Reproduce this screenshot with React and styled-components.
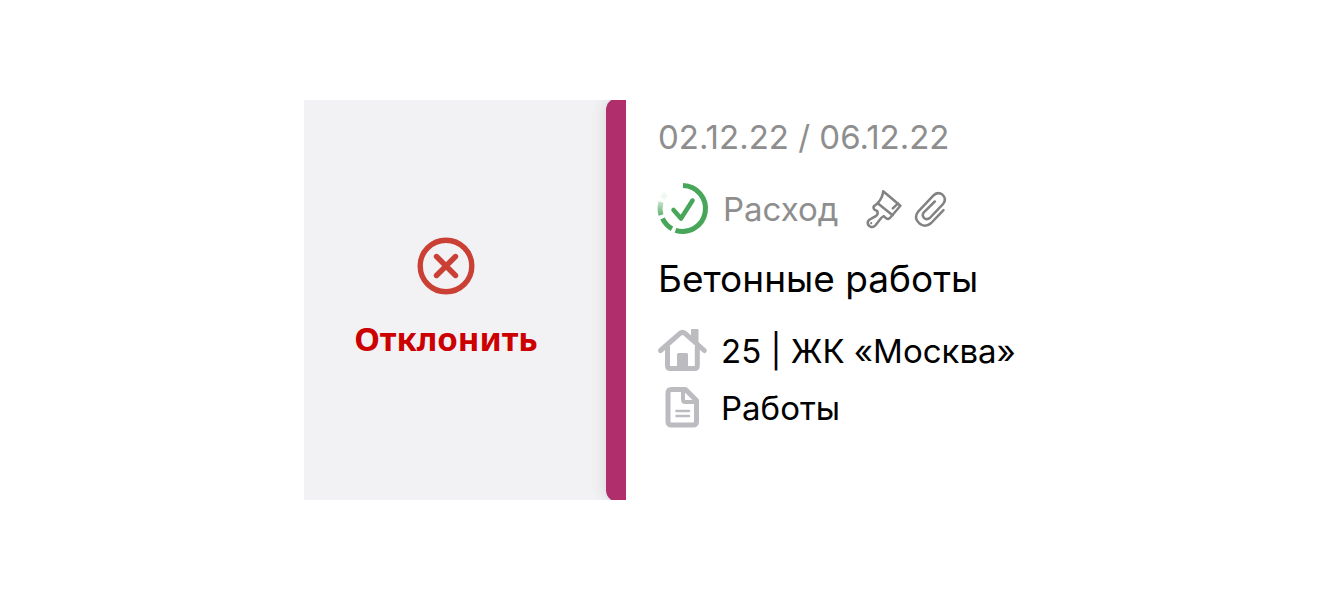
import React from "react";
import styled, { createGlobalStyle } from "styled-components";

const GlobalStyle = createGlobalStyle`
  *, *::before, *::after { box-sizing: border-box; }
  body { margin: 0; background: #fff; font-family: Inter, "Liberation Sans", sans-serif; }
`;

const Page = styled.main`
  display: flex;
  align-items: center;
  justify-content: center;
  min-height: 100vh;
`;

const SwipeCard = styled.article`
  display: flex;
  width: 100%;
  max-width: 735px;
  min-height: 400px;
  background: #fff;
`;

const ActionPanel = styled.div`
  display: flex;
  flex: 0 0 322px;
  background: #f2f2f5;
  overflow: hidden;
`;

const RejectButton = styled.button`
  display: flex;
  flex: 1;
  flex-direction: column;
  align-items: center;
  justify-content: center;
  gap: 22px;
  padding: 0 18px 3px 0;
  border: 0;
  background: none;
  color: #cc0000;
  font: 700 33px/44px "Noto Sans", sans-serif;
  cursor: pointer;
`;

const Stripe = styled.div`
  flex: 0 0 20px;
  margin: -2px 0;
  border-radius: 12px 0 0 12px;
  background: #b02e6c;
  box-shadow: 0 0 16px rgba(0, 0, 0, 0.12);
`;

const Details = styled.div`
  flex: 1;
  min-width: 0;
  padding: 17px 0 0 32px;
`;

const Dates = styled.p`
  margin: 0 0 26px;
  color: #8e8e8e;
  font-size: 33px;
  line-height: 40px;
`;

const StatusRow = styled.div`
  display: flex;
  align-items: center;
  height: 52px;
  color: #8e8e8e;
  font-size: 33px;
  line-height: 40px;
`;

const StatusLabel = styled.span`
  margin: 0 27px 0 13px;
`;

const Attachments = styled.span`
  display: flex;
  gap: 11px;
`;

const Title = styled.h1`
  margin: 20px 0 26px;
  color: #000;
  font-size: 37px;
  font-weight: 400;
  line-height: 48px;
`;

const InfoList = styled.ul`
  display: grid;
  gap: 13px;
  margin: 0;
  padding: 0;
  list-style: none;
`;

const InfoItem = styled.li`
  display: flex;
  align-items: center;
  gap: 13px;
  color: #000;
  font-size: 33px;
  line-height: 44px;
`;

const Icon = styled.svg`
  display: block;
  flex: none;
  overflow: visible;
  fill: none;
  stroke: currentColor;
  stroke-linecap: round;
  stroke-linejoin: round;
`;

const MutedIcon = styled(Icon)`
  color: #bbbbc0;
`;

const DangerIcon = styled(Icon)`
  color: #cb4035;
`;

const SuccessIcon = styled(Icon)`
  color: #47a659;
`;

const AttachmentIcon = styled(Icon)`
  color: #828282;
`;

const RejectIcon = () => (
  <DangerIcon width="58" height="58" viewBox="0 0 58 58" strokeWidth="5.4" aria-hidden="true">
    <circle cx="29" cy="29" r="25.8" />
    <path d="M19.5 19.5 38.5 38.5M38.5 19.5 19.5 38.5" />
  </DangerIcon>
);

const ApprovedIcon = () => (
  <SuccessIcon width="52" height="52" viewBox="0 0 52 52" strokeWidth="5" role="img" aria-label="Одобрено">
    <defs>
      <linearGradient id="fade" x1="0" y1="32" x2="0" y2="13" gradientUnits="userSpaceOnUse">
        <stop offset="0" stopColor="#47a659" stopOpacity="0.85" />
        <stop offset="1" stopColor="#47a659" stopOpacity="0.08" />
      </linearGradient>
    </defs>
    <g strokeLinecap="butt">
      <path d="M25 2.5A23 23 0 1 1 17.5 47.4" />
      <path d="M14 45.7A23 23 0 0 1 4.5 35.5" />
      <path d="M3 32A23 23 0 0 1 3 19" stroke="url(#fade)" />
      <path d="M4.5 15.5A23 23 0 0 1 8 10.5" strokeOpacity="0.08" />
    </g>
    <path d="m15.5 27 7.5 8.5L34.5 17.5" strokeWidth="4.5" />
  </SuccessIcon>
);

const BrushIcon = () => (
  <AttachmentIcon width="37" height="40" viewBox="0 0 37 40" strokeWidth="2.5" aria-hidden="true">
    <path d="M17.2 2.2 34.4 16.7 23.7 29.2Q22 30.8 20.2 29.3L17.8 27.1Q15.8 27.8 13.8 30.7L9.3 36.5Q7.1 38.8 4.3 37.6 1 36 1.9 32.5 2.5 30.7 5.7 29.4L10.2 26.8Q12.4 25 11.3 22.2L8.3 20.5Q6.8 18.6 8.2 16.9L11.7 14.2Q16.5 9.2 17.2 2.2Z" />
    <path d="M11.7 14.2 26.6 26.2M31.8 14.6 26.8 19.3" />
    <circle cx="5.2" cy="34.2" r="0.5" strokeWidth="1.2" />
  </AttachmentIcon>
);

const ClipIcon = () => (
  <AttachmentIcon width="34" height="40" viewBox="0 0 34 40" strokeWidth="2.5" aria-hidden="true">
    <path d="M29.5 21.2 17.2 34Q11.4 39.2 5.5 34.6-.8 29 4.2 22.6L19.7 6.2Q24 2.4 28.4 5.6 33 9.7 29.2 14.8L15.8 29Q13.2 31.2 10.3 29.2 7.4 26.4 9.8 23.4L20.8 12.5" />
  </AttachmentIcon>
);

const HomeIcon = () => (
  <MutedIcon width="50" height="44" viewBox="0 0 50 44" strokeWidth="5" aria-hidden="true">
    <path d="M2.5 21.5 22.3 4.2Q24.5 2.4 26.7 4.2L46.3 21.5" />
    <path d="M9.5 18V36.5Q9.5 39.5 12.5 39.5H36.3Q39.3 39.5 39.3 36.5V18" />
    <path d="M33 1Q33 0 34 0H39.5Q40.5 0 40.5 1V16L33 10ZM19 25.5Q19 24 20.5 24H28.5Q30 24 30 25.5V40H19Z" fill="currentColor" stroke="none" />
  </MutedIcon>
);

const DocumentIcon = () => (
  <MutedIcon width="50" height="44" viewBox="0 0 50 44" strokeWidth="5" aria-hidden="true">
    <path d="M13.5 3.5H27.5L38.5 14.5V35.5Q38.5 39 35 39H13.5Q10 39 10 35.5V7Q10 3.5 13.5 3.5Z" />
    <path d="M25 4.5V13.5Q25 16 27.5 16H37.5" strokeWidth="4" />
    <path d="M18.5 25H31M18.5 30H31" strokeWidth="2.5" />
  </MutedIcon>
);

export default function App() {
  return (
    <>
      <GlobalStyle />
      <Page>
        <SwipeCard>
          <ActionPanel>
            <RejectButton type="button">
              <RejectIcon />
              Отклонить
            </RejectButton>
            <Stripe />
          </ActionPanel>
          <Details>
            <Dates>02.12.22 / 06.12.22</Dates>
            <StatusRow>
              <ApprovedIcon />
              <StatusLabel>Расход</StatusLabel>
              <Attachments>
                <BrushIcon />
                <ClipIcon />
              </Attachments>
            </StatusRow>
            <Title>Бетонные работы</Title>
            <InfoList>
              <InfoItem>
                <HomeIcon />
                25 | ЖК «Москва»
              </InfoItem>
              <InfoItem>
                <DocumentIcon />
                Работы
              </InfoItem>
            </InfoList>
          </Details>
        </SwipeCard>
      </Page>
    </>
  );
}
